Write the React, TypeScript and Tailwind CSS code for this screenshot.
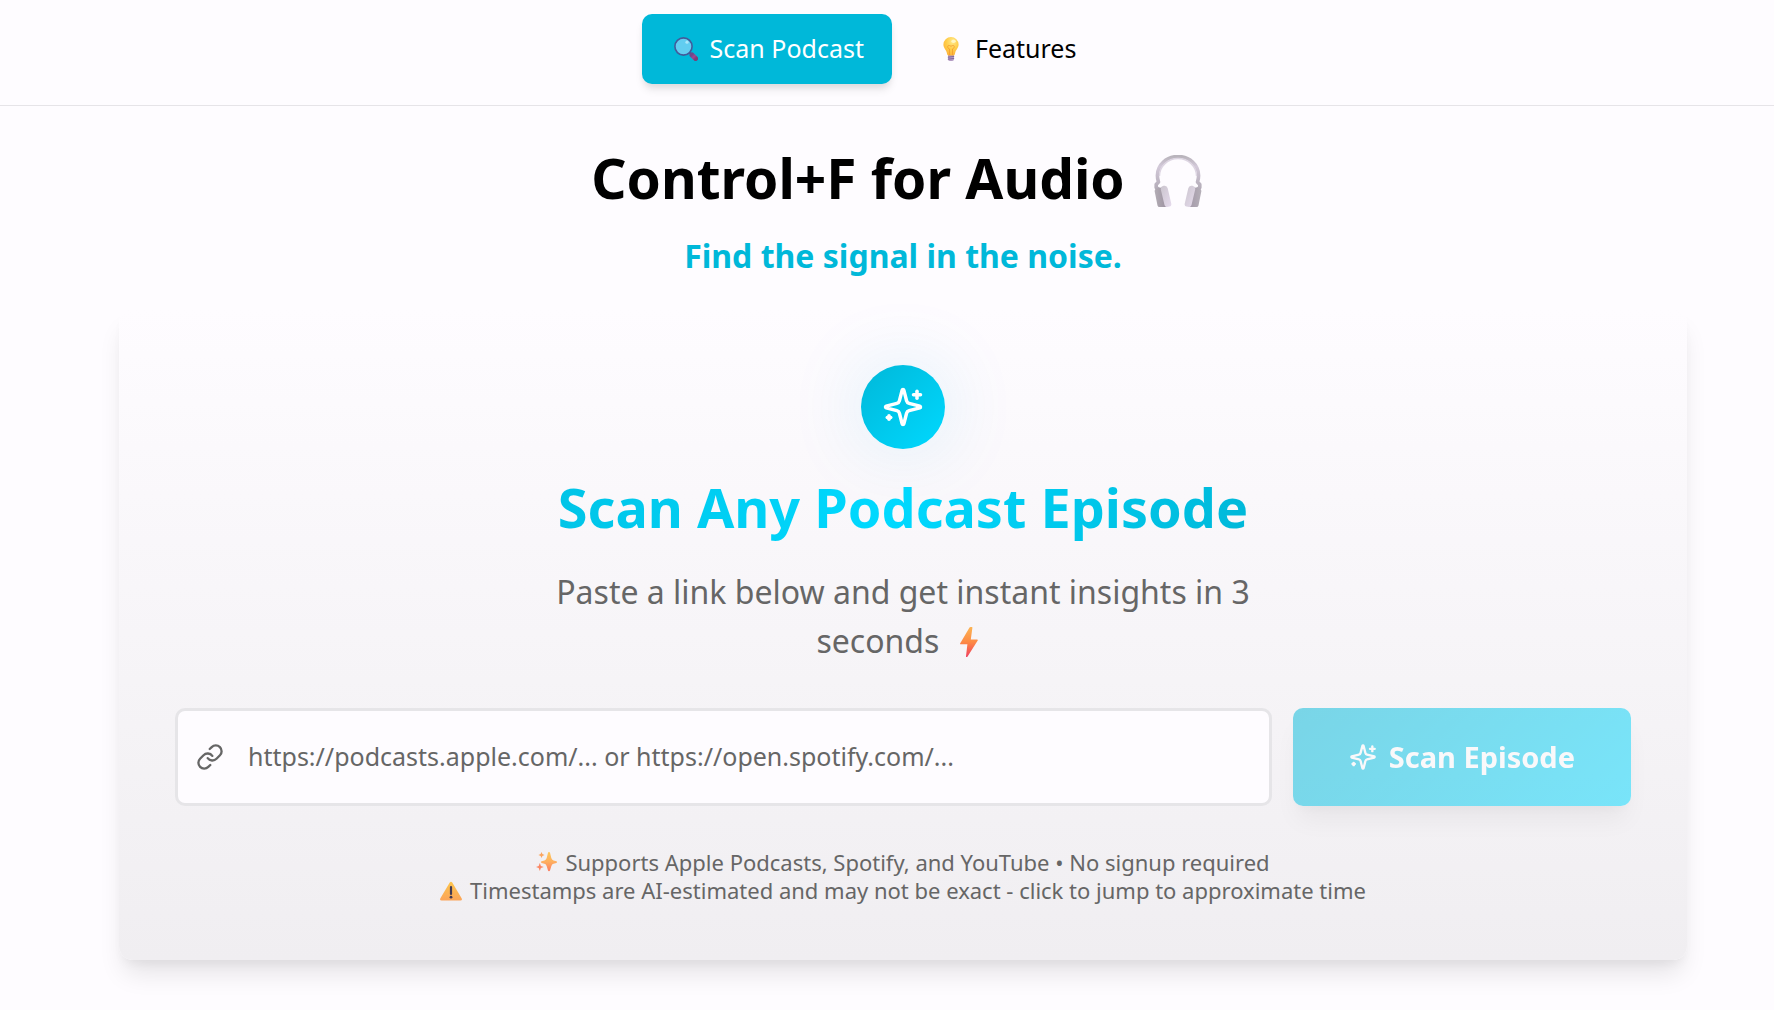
import { useState } from "react";
import { Link } from "lucide-react";

function SparklesIcon({ className }: { className?: string }) {
  return (
    <svg viewBox="0 0 24 24" fill="none" stroke="currentColor" strokeWidth="2" strokeLinecap="round" strokeLinejoin="round" className={className} aria-hidden="true">
      <path d="M9.937 15.5A2 2 0 0 0 8.5 14.063l-6.135-1.582a.5.5 0 0 1 0-.962L8.5 9.936A2 2 0 0 0 9.937 8.5l1.582-6.135a.5.5 0 0 1 .963 0L14.063 8.5A2 2 0 0 0 15.5 9.937l6.135 1.581a.5.5 0 0 1 0 .964L15.5 14.063a2 2 0 0 0-1.437 1.437l-1.582 6.135a.5.5 0 0 1-.963 0z" />
      <path d="M20 3v4" />
      <path d="M22 5h-4" />
      <path d="M4 17v2" />
      <path d="M5 18H3" />
    </svg>
  );
}

function Magnifier() {
  return (
    <svg viewBox="0 0 24 24" className="size-6 shrink-0" aria-hidden="true">
      <defs>
        <linearGradient id="handle" x1="0" y1="0" x2="1" y2="1">
          <stop offset="0" stopColor="#6b4a8c" />
          <stop offset="0.5" stopColor="#a04590" />
          <stop offset="1" stopColor="#7b3f78" />
        </linearGradient>
      </defs>
      <path d="M15.5 15.5l2 2" stroke="#4a5a94" strokeWidth="2" />
      <path d="M18 18l3.6 3.6" stroke="url(#handle)" strokeWidth="5" strokeLinecap="round" />
      <circle cx="9.5" cy="9.5" r="8.6" fill="#62cdf0" stroke="#435a9a" strokeWidth="1.6" />
      <circle cx="13" cy="5.2" r="1.6" fill="#a9e6fa" />
    </svg>
  );
}

function Bulb() {
  return (
    <svg viewBox="0 0 16 24" className="h-6 w-4 shrink-0" aria-hidden="true">
      <defs>
        <radialGradient id="bulb" cx="0.6" cy="0.25" r="0.8">
          <stop offset="0" stopColor="#ffe98a" />
          <stop offset="0.5" stopColor="#ffcd4a" />
          <stop offset="1" stopColor="#fdb137" />
        </radialGradient>
      </defs>
      <path d="M5 17h6v5.2a1.8 1.8 0 0 1-1.8 1.8H6.800a1.800 1.800 0 0 1-1.800-1.800z" fill="#b49cc4" />
      <path d="M4.800 20.200l6.400-.8M4.800 22.200l6.400-.8" stroke="#745a92" strokeWidth="0.8" />
      <path d="M8 0a7.600 7.600 0 0 1 7.600 7.600c0 3.600-2.600 5-3.400 8.200-.3 1.400-.7 2.700-1.600 2.700H5.400c-.9 0-1.300-1.300-1.600-2.700C3 12.600.4 11.200.4 7.600A7.600 7.600 0 0 1 8 0z" fill="url(#bulb)" />
      <path d="M6.500 18V12c-1.600-.5-2-1.800-1.700-2.800.4-1.200 1.800-1 2.200-.2h2c.6-.9 2-.8 2.200.4.200 1.100-.6 2.200-1.700 2.600v6" fill="none" stroke="#f39a2d" strokeWidth="0.8" />
      <ellipse cx="10.600" cy="4.200" rx="2.200" ry="1.700" fill="#fff6c4" />
    </svg>
  );
}

function Headphones() {
  return (
    <svg viewBox="0 0 50 52" className="mt-1.5 mr-3 h-[52px] w-[50px] shrink-0" aria-hidden="true">
      <defs>
        <linearGradient id="band" x1="0" y1="0" x2="0" y2="1">
          <stop offset="0" stopColor="#b9b4bc" />
          <stop offset="0.3" stopColor="#d3c9d9" />
          <stop offset="1" stopColor="#b2abb6" />
        </linearGradient>
        <linearGradient id="cupL" x1="0" y1="0" x2="1" y2="0">
          <stop offset="0" stopColor="#b3adb5" />
          <stop offset="1" stopColor="#9b909f" />
        </linearGradient>
        <linearGradient id="cupR" x1="0" y1="0" x2="1" y2="0">
          <stop offset="0" stopColor="#a398a8" />
          <stop offset="1" stopColor="#b5afb8" />
        </linearGradient>
        <linearGradient id="pad" x1="0" y1="0" x2="1" y2="1">
          <stop offset="0" stopColor="#cbc5ce" />
          <stop offset="1" stopColor="#e6dbed" />
        </linearGradient>
      </defs>
      <path d="M7.500 35L3.200 32.500V29.500L5.500 27C4.500 24 4.400 21.500 4.400 20.500a20.600 19 0 0 1 41.200 0c0 1-.1 3.500-1.100 6.500l2.300 2.500v3L42.500 35" fill="none" stroke="url(#band)" strokeWidth="3.600" strokeLinejoin="round" />
      <path d="M6.500 21a18.500 17.500 0 0 1 37 0" fill="none" stroke="#ddd5e2" strokeWidth="1.400" />
      <path d="M1.600 36q0-2.200 2.200-2.600l5.500-1.200 5 18.800q-.3 1-2 1H6.500q-1.600 0-2-1.600z" fill="url(#cupL)" />
      <path d="M48.400 36q0-2.200-2.200-2.600l-5.500-1.200-5 18.800q.3 1 2 1h5.800q1.600 0 2-1.600z" fill="url(#cupR)" />
      <path d="M7.700 34q.2-2.600 2.800-3.200 3.500-.8 4.200 2.400l3.600 15.600q.4 2.400-1.800 2.800l-2.500.4q-2 .2-2.500-1.900z" fill="url(#pad)" />
      <path d="M42.300 34q-.2-2.600-2.800-3.200-3.500-.8-4.200 2.400l-3.600 15.600q-.4 2.400 1.800 2.800l2.500.4q2 .2 2.500-1.900z" fill="url(#pad)" />
    </svg>
  );
}

function Bolt() {
  return (
    <svg viewBox="0 0 18 30" className="mr-3 ml-3 inline-block h-[30px] w-[18px] align-[-4px]" aria-hidden="true">
      <defs>
        <linearGradient id="bolt" x1="0" y1="0" x2="0" y2="1">
          <stop offset="0" stopColor="#fcb454" />
          <stop offset="0.5" stopColor="#fd8a45" />
          <stop offset="1" stopColor="#f0405f" />
        </linearGradient>
      </defs>
      <path d="M9.500.6Q9.800 0 10.500 0h1.400q.8 0 .5.800L10.800 12.500h6.400q1 0 .5.900L7.600 29.400q-.4.600-1 .6-.7 0-.6-.8L7.400 17.300H.8q-1 0-.7-.9z" fill="url(#bolt)" />
    </svg>
  );
}

function SparkleEmoji() {
  return (
    <svg viewBox="0 0 21 20" className="inline-block h-5 w-[21px] shrink-0" aria-hidden="true">
      <defs>
        <linearGradient id="spark" x1="0" y1="0" x2="0" y2="1">
          <stop offset="0" stopColor="#fdc75a" />
          <stop offset="0.5" stopColor="#feb060" />
          <stop offset="1" stopColor="#fb7c62" />
        </linearGradient>
      </defs>
      <path d="M13 0q.8 0 1 .8l1.300 5.200q.5 1.900 2.200 2.400l2.900.9q.6.200.6.800t-.6.800l-2.900.9q-1.700.5-2.200 2.400L14 18.500q-.2.800-1 .8t-1-.8l-1.300-4.300q-.5-1.900-2.200-2.400l-2.900-.9Q5 10.700 5 10.100t.6-.8l2.900-.9q1.700-.5 2.200-2.400L12 .8q.2-.8 1-.8z" fill="url(#spark)" />
      <path d="M5.500 0l.9 2.100 2.100.9-2.100.9-.9 2.100-.9-2.100L2.500 3l2.100-.9z" fill="#fba55f" />
      <path d="M3.800 11l1.100 2.900L7.800 15l-2.900 1.100L3.800 19l-1.100-2.900L0 15l2.700-1.100z" fill="#fb8763" />
    </svg>
  );
}

function WarningEmoji() {
  return (
    <svg viewBox="0 0 22 20" className="mt-0.5 inline-block h-5 w-[22px] shrink-0" aria-hidden="true">
      <defs>
        <linearGradient id="warn" x1="0" y1="0" x2="0" y2="1">
          <stop offset="0" stopColor="#fdc64e" />
          <stop offset="1" stopColor="#fca458" />
        </linearGradient>
      </defs>
      <path d="M9.600 1.800Q11-.5 12.400 1.800L21.600 17.200q1.100 2.300-1.200 2.300H1.600q-2.300 0-1.200-2.300z" fill="url(#warn)" />
      <path d="M11 6v7" stroke="#423a52" strokeWidth="2.200" strokeLinecap="round" />
      <circle cx="11" cy="16.200" r="1.400" fill="#423a52" />
    </svg>
  );
}

export default function App() {
  const [url, setUrl] = useState("");

  return (
    <div className="min-h-screen bg-[#fefcff] font-['Noto_Sans',sans-serif] text-black">
      <header className="border-b border-[#e6e4e8] pr-7">
        <nav className="flex justify-center gap-4 pt-[14px] pb-[21px]">
          <button type="button" className="flex h-[70px] items-center gap-3 rounded-[10px] bg-[#00b8d9] pr-7 pl-8 text-[25px] text-white shadow-[0_7px_10px_-2px_rgba(0,0,0,0.1),0_4px_7px_-2px_rgba(0,0,0,0.06)]">
            <Magnifier />
            Scan Podcast
          </button>
          <button type="button" className="flex h-[70px] items-center gap-4 rounded-[10px] pr-7 pl-[35px] text-[25px]">
            <Bulb />
            Features
          </button>
        </nav>
      </header>

      <main className="pt-[37px] pr-[87px] pb-[50px] pl-[119px]">
        <div className="text-center">
          <h1 className="flex h-[70px] items-center justify-center gap-7 text-[55px] font-bold">
            Control+F for Audio
            <Headphones />
          </h1>
          <p className="mt-[18px] text-[32px] leading-[49px] font-bold text-[#00b8d9]">Find the signal in the noise.</p>
        </div>

        <section className="mt-[29px] rounded-[14px] bg-gradient-to-b from-[#fefcff] to-[#f0eef1] p-14 text-center shadow-[0_18px_26px_-5px_rgba(0,0,0,0.1),0_7px_11px_-4px_rgba(0,0,0,0.05)]">
          <div className="mx-auto flex size-[84px] items-center justify-center rounded-full bg-linear-135 from-[#00b8d9] to-[#00d9ff] text-white shadow-[0_0_80px_rgba(0,165,225,0.14)]">
            <SparklesIcon className="size-[42px]" />
          </div>
          <h2 className="mx-auto mt-[23px] w-fit bg-linear-100 from-[#00c4e7] via-[#00d9ff] via-48% to-[#00b8d9] bg-clip-text text-[54px] leading-[70px] font-bold text-transparent">
            Scan Any Podcast Episode
          </h2>
          <p className="mx-auto mt-[25px] max-w-[735px] text-[32px] leading-[49px] text-[#666]">
            Paste a link below and get instant insights in 3 seconds <Bolt />
          </p>

          <form className="mt-[43px] flex gap-[21px]" onSubmit={(e) => e.preventDefault()}>
            <label className="flex h-[98px] min-w-0 flex-1 items-center gap-6 rounded-[10px] border-3 border-[#e6e5e8] bg-[#fefcff] px-[18px]">
              <Link className="size-7 shrink-0 text-[#666]" aria-hidden="true" />
              <input
                type="url"
                aria-label="Podcast link"
                value={url}
                onChange={(e) => setUrl(e.target.value)}
                placeholder="https://podcasts.apple.com/... or https://open.spotify.com/..."
                className="min-w-0 flex-1 bg-transparent text-[25px] outline-none placeholder:text-[#666]"
              />
            </label>
            <button type="submit" disabled className="flex h-[98px] items-center gap-3 rounded-[10px] bg-linear-135 from-[#00b8d9] to-[#00d9ff] px-14 text-[29px] font-bold text-white opacity-50 shadow-[0_18px_26px_-5px_rgba(0,0,0,0.1),0_7px_11px_-4px_rgba(0,0,0,0.05)]">
              <SparklesIcon className="size-7" />
              Scan Episode
            </button>
          </form>

          <div className="mt-[42px] text-[22px] leading-7 text-[#666]">
            <p className="flex items-center justify-center gap-2"><SparkleEmoji /> Supports Apple Podcasts, Spotify, and YouTube • No signup required</p>
            <p className="flex items-center justify-center gap-2"><WarningEmoji /> Timestamps are AI-estimated and may not be exact - click to jump to approximate time</p>
          </div>
        </section>
      </main>
    </div>
  );
}
